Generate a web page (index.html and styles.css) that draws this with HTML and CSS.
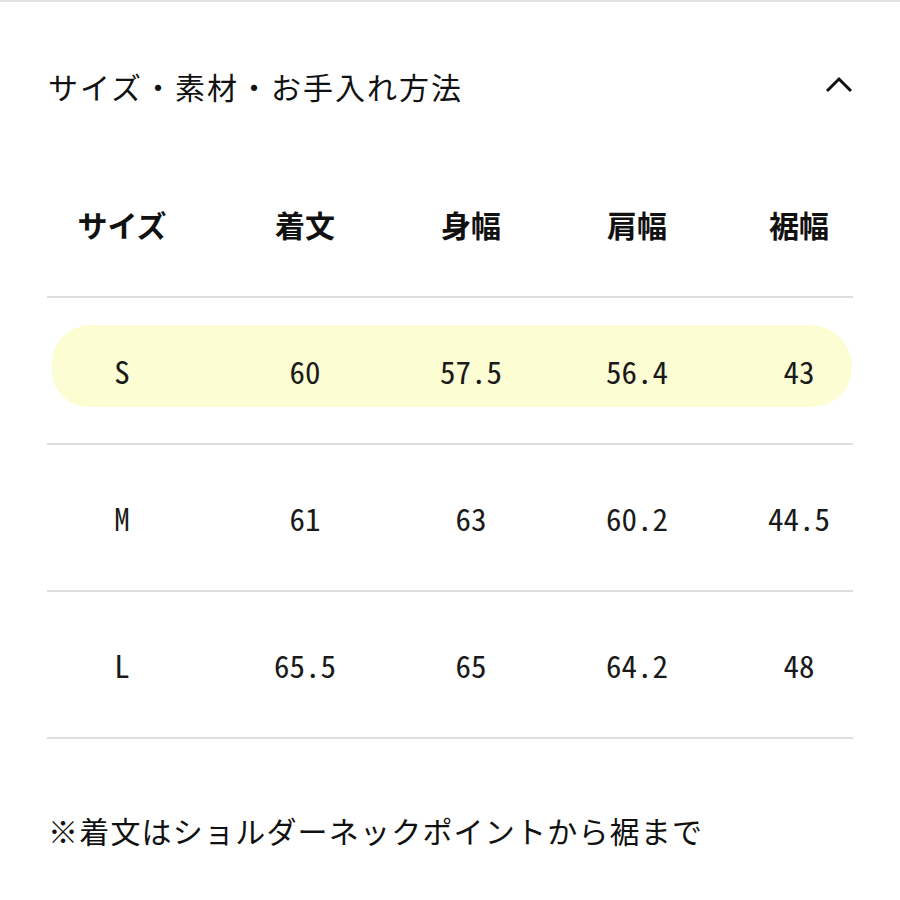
FILE: index.html
```html
<!DOCTYPE html>
<html lang="ja">
<head>
<meta charset="utf-8">
<link rel="stylesheet" href="styles.css">
</head>
<body>
<div class="top-rule"></div>
<section class="panel">
  <div class="acc-head">
    <h2 class="acc-title">サイズ・素材・お手入れ方法</h2>
    <svg class="chev" width="28" height="18" viewBox="0 0 28 18"><path d="M2 15 L14 3 L26 15" fill="none" stroke="#111" stroke-width="3"/></svg>
  </div>
  <div class="size-table">
    <div class="row head">
      <div class="cell">サイズ</div><div class="cell">着文</div><div class="cell">身幅</div><div class="cell">肩幅</div><div class="cell">裾幅</div>
    </div>
    <div class="row data hl">
      <div class="marker"></div>
      <div class="cell">S</div><div class="cell">60</div><div class="cell">57.5</div><div class="cell">56.4</div><div class="cell">43</div>
    </div>
    <div class="row data">
      <div class="cell">M</div><div class="cell">61</div><div class="cell">63</div><div class="cell">60.2</div><div class="cell">44.5</div>
    </div>
    <div class="row data">
      <div class="cell">L</div><div class="cell">65.5</div><div class="cell">65</div><div class="cell">64.2</div><div class="cell">48</div>
    </div>
  </div>
  <p class="note">※着文はショルダーネックポイントから裾まで</p>
</section>
</body>
</html>
```
FILE: styles.css
```css
html, body { margin: 0; padding: 0; background: #fff; }
body { font-family: "Noto Sans CJK JP", "Noto Sans", sans-serif; color: #111; width: 900px; }
.top-rule { height: 2px; background: #e2e2e2; }
.panel { padding: 0 47px; }
.acc-head { display: flex; align-items: center; justify-content: space-between; padding-top: 64px; height: 40px; }
.acc-title { margin: 0 0 0 1px; font-size: 30px; font-weight: 400; line-height: 40px; letter-spacing: 2px; }
.chev { margin-right: 0; margin-top: -2px; }
.size-table { margin-top: 45px; }
.row { display: grid; grid-template-columns: 150px 216px 116px 216px 108px; height: 145px; align-items: center; border-bottom: 2px solid #dedede; position: relative; }
.cell { text-align: center; position: relative; z-index: 1; }
.head .cell { font-size: 30px; font-weight: 700; }
.data .cell { font-family: "Noto Sans Mono CJK JP", "DejaVu Sans Mono", monospace; font-size: 31px; color: #1a1a1a; }
.marker { position: absolute; left: 5px; right: 1px; top: 27px; bottom: 36px; background: #fdfdd3; border-radius: 42px 46px 44px 40px; z-index: 0; }
.note { margin: 71px 0 0 1px; font-size: 30px; line-height: 40px; letter-spacing: 1.2px; }
```
